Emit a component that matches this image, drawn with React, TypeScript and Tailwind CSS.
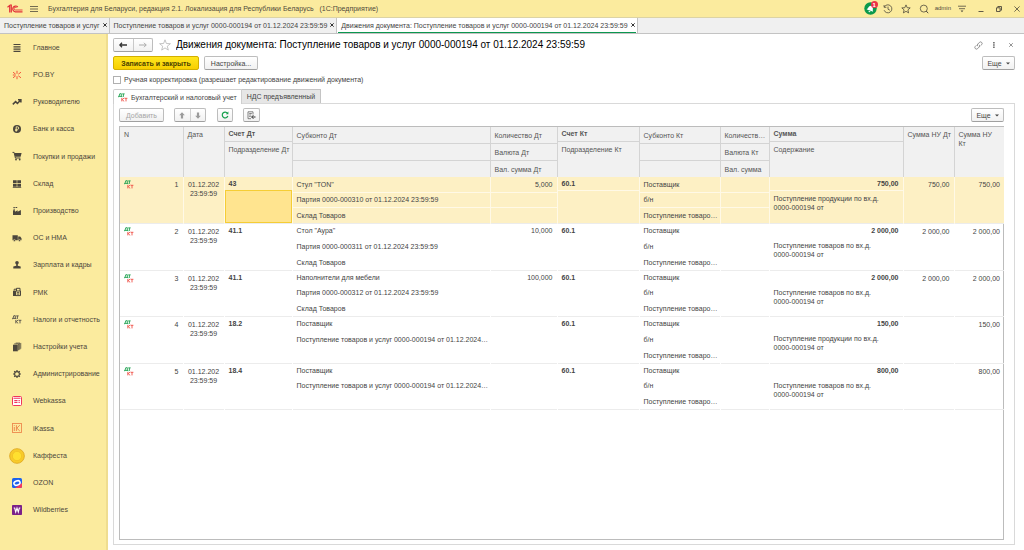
import type { ReactNode } from 'react';

interface Entry {
  n: number;
  debit: string;
  debitSub: string[];
  quantity: string;
  total: string;
  content: string;
  taxDebit: string;
  taxCredit: string;
}

const GOODS = 'Поступление товаров по вх.д. 0000-000194 от';
const PRODUCTS = 'Поступление продукции по вх.д. 0000-000194 от';
const RECEIPT = 'Поступление товаров и услуг 0000-000194 от 01.12.2024 23:59:59';

const entries: Entry[] = [
  { n: 1, debit: '43', debitSub: ['Стул "TON"', 'Партия 0000-000310 от 01.12.2024 23:59:59', 'Склад Товаров'], quantity: '5,000', total: '750,00', content: PRODUCTS, taxDebit: '750,00', taxCredit: '750,00' },
  { n: 2, debit: '41.1', debitSub: ['Стол "Аура"', 'Партия 0000-000311 от 01.12.2024 23:59:59', 'Склад Товаров'], quantity: '10,000', total: '2 000,00', content: GOODS, taxDebit: '2 000,00', taxCredit: '2 000,00' },
  { n: 3, debit: '41.1', debitSub: ['Наполнители для мебели', 'Партия 0000-000312 от 01.12.2024 23:59:59', 'Склад Товаров'], quantity: '100,000', total: '2 000,00', content: GOODS, taxDebit: '2 000,00', taxCredit: '2 000,00' },
  { n: 4, debit: '18.2', debitSub: ['Поставщик', 'Поступление товаров и услуг 0000-000194 от 01.12.2024…', ''], quantity: '', total: '150,00', content: PRODUCTS, taxDebit: '', taxCredit: '150,00' },
  { n: 5, debit: '18.4', debitSub: ['Поставщик', 'Поступление товаров и услуг 0000-000194 от 01.12.2024…', ''], quantity: '', total: '800,00', content: GOODS, taxDebit: '', taxCredit: '800,00' },
];

const windowTabs = [
  { title: 'Поступление товаров и услуг', active: false },
  { title: RECEIPT, active: false },
  { title: `Движения документа: ${RECEIPT}`, active: true },
];

function DtKtIcon({ className = '', mono = false }: { className?: string; mono?: boolean }) {
  return (
    <svg className={`shrink-0 ${className}`} width="10" height="9" viewBox="0 0 10 9" fill="none" strokeWidth="0.9" aria-hidden="true">
      <path stroke={mono ? '#55504a' : '#1fa350'} d="M.5 4.2V3.4H4v.8M1 3.4 1.8.7h1.5v2.7M4.2.9h2.5M5.4.9v3" />
      <path stroke={mono ? '#55504a' : '#ee4e45'} d="M3.8 5v3.4M6.2 5 4.2 6.6l2 1.8M6.6 5.3h2.8M8 5.3v3.1" />
    </svg>
  );
}

function Icon({ children, size = 10 }: { children: ReactNode; size?: number }) {
  return (
    <svg width={size} height={size} viewBox="0 0 10 10" fill="none" stroke="currentColor" strokeWidth="1" aria-hidden="true">
      {children}
    </svg>
  );
}

const sections: { label: string; icon: ReactNode }[] = [
  { label: 'Главное', icon: <Icon><path d="M1.5 1.5h7M1.5 3.8h7M1.5 6.1h7M1.5 8.4h7" strokeWidth="1.2" /></Icon> },
  { label: 'PO.BY', icon: <Icon><path stroke="#f4573c" d="M5 .8v3M5 6.2v3M1 2.2l2.7 2M1 7.8l2.7-2M9 2.2l-2.7 2M9 7.8l-2.7-2M.8 5h2.4" /></Icon> },
  { label: 'Руководителю', icon: <Icon><path strokeWidth="1.5" d="M.8 7.4 3.6 4.6l1.8 1.8 2.8-3M6 2.7h2.9v2.9" /></Icon> },
  { label: 'Банк и касса', icon: <Icon><circle cx="5" cy="5" r="4" fill="currentColor" stroke="none" /><path stroke="#fbeb9e" strokeWidth=".9" d="M4.2 7.7V2.8h1.2a1.3 1.3 0 0 1 0 2.6H3.2M3.2 6.5h2.2" /></Icon> },
  { label: 'Покупки и продажи', icon: <Icon><path d="M.5 1.4h1.6L3.4 7h5" /><path fill="currentColor" stroke="none" d="M2.4 2h7.2l-1 3.8H3.3z" /><circle cx="4" cy="8.5" r=".9" fill="currentColor" stroke="none" /><circle cx="7.7" cy="8.5" r=".9" fill="currentColor" stroke="none" /></Icon> },
  { label: 'Склад', icon: <Icon><path fill="currentColor" stroke="none" d="M1 1.3h3.7v3H1zM5.3 1.3H9v3H5.3zM1 4.9h3.7v2.8H1zM5.3 4.9H9v2.8H5.3zM.8 8.2h8.4v.8H.8z" /></Icon> },
  { label: 'Производство', icon: <Icon><path fill="currentColor" stroke="none" d="M1 9V4.2h2v1.6l2.6-1.6v1.6L8.900 4v5zM1.5 2.8h1.3v1H1.5zM1.4 1h1.4v.9H1.400zM3.500 1h1.700v.9H3.500z" /></Icon> },
  { label: 'ОС и НМА', icon: <Icon><path fill="currentColor" stroke="none" d="M.5 2.3h5.3v4.9H.5zM6.2 3.4h2l1.3 1.9v1.9H6.2z" /><circle cx="2.4" cy="7.4" r="1" fill="currentColor" stroke="#fbeb9e" strokeWidth=".5" /><circle cx="7.5" cy="7.4" r="1" fill="currentColor" stroke="#fbeb9e" strokeWidth=".5" /></Icon> },
  { label: 'Зарплата и кадры', icon: <Icon><circle cx="5" cy="2.7" r="1.8" fill="currentColor" stroke="none" /><path fill="currentColor" stroke="none" d="M4.2 4h1.6v1.7l2.9.9v2H1.3v-2l2.9-.9z" /></Icon> },
  { label: 'РМК', icon: <Icon><path fill="currentColor" stroke="none" d="M1 3.8h3V9H1z" /><path d="M3.7 4h4.8v4.6H3.7zM4.5 4V1.3h3.5V4M5 5.7h2.4M5 7.1h2.4M2.2 3.6V2.2h2" /></Icon> },
  { label: 'Налоги и отчетность', icon: <DtKtIcon mono /> },
  { label: 'Настройки учета', icon: <Icon><path fill="currentColor" stroke="none" d="M1 2.7h4.8v6.6H1z" /><path strokeWidth=".8" d="M2.2 1.9h4.4v6.4M3.7 1.1H8v6.3" /><path strokeWidth=".6" d="M7.3 1.3v6.5M8.8.9v5.8" /></Icon> },
  { label: 'Администрирование', icon: <Icon><circle cx="5" cy="5" r="2.4" strokeWidth="1.1" /><path strokeWidth="1.2" d="M5 1v1.500M5 7.500V9M1 5h1.500M7.500 5H9M2.200 2.200l1 1M6.800 6.800l1 1M7.800 2.200l-1 1M3.200 6.800l-1 1" /></Icon> },
  { label: 'Webkassa', icon: <Icon><rect x=".5" y=".5" width="9" height="9" rx="1" fill="#fff" stroke="#f0355a" strokeWidth="1" /><path stroke="#f0355a" strokeWidth="1.1" d="M1.5 2.2h7M2.3 4.6h3.2M2.3 6.5h3.2M6.5 4.6h1.3M6.5 6.5h1.3" /></Icon> },
  { label: 'iKassa', icon: <Icon><rect x=".5" y=".5" width="9" height="9" stroke="#ee8a4e" strokeWidth=".9" /><path stroke="#ee8a4e" strokeWidth="1" d="M2.3 4v4M2.3 2.2v.9M4.4 2.2V8M7.8 2.2 4.8 5.1l3 2.9" /></Icon> },
  { label: 'Каффеста', icon: <Icon size={16}><circle cx="5" cy="5" r="4.6" fill="#f8cb2a" stroke="#dca51f" strokeWidth=".5" /><circle cx="5" cy="5" r="2.9" fill="#ffe02f" stroke="#f0b924" strokeWidth=".4" /></Icon> },
  { label: 'OZON', icon: <Icon><rect width="10" height="10" rx="1.6" fill="#1b62ee" stroke="none" /><path fill="#f53a5d" stroke="none" d="M10 5v3.4A1.6 1.6 0 0 1 8.4 10H3z" /><ellipse cx="5" cy="5" rx="3.2" ry="2.1" stroke="#fff" strokeWidth="1.5" transform="rotate(-20 5 5)" /></Icon> },
  { label: 'Wildberries', icon: <Icon><rect width="10" height="10" rx=".8" fill="#7b2189" stroke="none" /><path stroke="#fff" strokeWidth="1.1" d="M1.7 3h1l1 4 1.3-4 1.3 4 1-4h1" /></Icon> },
];

const button = 'flex h-[14px] items-center justify-center rounded-xs border border-[#bdbdbd] border-b-[#a0a0a0] bg-linear-to-b from-white to-[#f1f1f1]';

function TitleBar() {
  return (
    <header className="flex h-[17px] items-center bg-[#fbeb9e] px-[7px] text-[#4f4a3c]">
      <svg width="16" height="10" viewBox="0 0 16 10" fill="none" stroke="#e2323a" strokeWidth="1.2" aria-label="1С" role="img">
        <path d="M.5 3.2 2.7 1.4V8.5M4.3 8.5V1H2.9" />
        <path d="M10.8 3A2.9 2.9 0 1 0 8.3 7.8H15.5" />
        <path d="M9.7 4A1.4 1.4 0 1 0 8.4 6H15.5" strokeWidth=".9" />
      </svg>
      <button aria-label="Меню" className="ml-[7px]">
        <svg width="8" height="8" viewBox="0 0 8 8" stroke="currentColor" strokeWidth=".8"><path d="M0 1.5h8M0 4h8M0 6.5h8" /></svg>
      </button>
      <span className="ml-[10px] flex-1 truncate whitespace-pre">Бухгалтерия для Беларуси, редакция 2.1. Локализация для Республики Беларусь   (1С:Предприятие)</span>
      <div className="flex items-center">
        <button aria-label="Уведомления" className="relative mr-[6px]">
          <svg width="13" height="13" viewBox="0 0 13 13"><circle cx="6.5" cy="6.5" r="6.2" fill="#0c9a4c" /><path fill="#fff" d="M2.8 8.7C4.5 7.5 3.7 3.6 6.5 3.6S8.500 7.500 10.200 8.700zM5.400 9.200h2.200a1.100 1.100 0 0 1-2.200 0z" transform="rotate(20 6.5 6.5)" /></svg>
          <span className="absolute -top-px -right-px flex size-[7px] items-center justify-center rounded-full bg-[#ee3344] text-[6px] leading-none font-bold text-white">1</span>
        </button>
        <button aria-label="История" className="mr-2">
          <Icon><path strokeWidth=".8" d="M1.3 3A4 4 0 1 1 1.1 6.2M1.1 1v2.3h2.3M5 2.6V5.2l1.9 1" /></Icon>
        </button>
        <button aria-label="Избранное" className="mr-2">
          <Icon><path strokeWidth=".8" d="m5 .9 1.2 2.8 3 .2L6.9 5.9l.7 3L5 7.3 2.4 8.9l.7-3L.8 3.9l3-.2z" /></Icon>
        </button>
        <button aria-label="Поиск" className="mr-[6px]">
          <Icon><circle cx="4.8" cy="4.6" r="3.5" strokeWidth=".8" /><path d="m7.2 7 2 2.2" /></Icon>
        </button>
        <span className="mr-[7px] text-[6px]">admin</span>
        <button aria-label="Сервис" className="mr-[12px]">
          <svg width="8" height="8" viewBox="0 0 8 8" stroke="currentColor" strokeWidth=".8" fill="none"><path d="M0 1.2h8M1 3.7h6" /><path d="M2.6 5.6h2.8L4 7.2z" fill="currentColor" stroke="none" /></svg>
        </button>
        <button aria-label="Свернуть" className="mr-[12px]">
          <svg width="6" height="8" viewBox="0 0 6 8" stroke="currentColor" strokeWidth=".9"><path d="M.5 6.5h5" /></svg>
        </button>
        <button aria-label="Восстановить" className="mr-[12px]">
          <svg width="6" height="6" viewBox="0 0 6 6" stroke="currentColor" strokeWidth=".9" fill="none"><path d="M.5 1.8h3.6v3.7H.5zM1.8 1.6V.5h3.7v3.7H4.2" /></svg>
        </button>
        <button aria-label="Закрыть программу" className="-mr-[3px]">
          <svg width="6" height="6" viewBox="0 0 6 6" stroke="currentColor" strokeWidth=".8"><path d="m.4.4 5.2 5.2M5.6.4.4 5.6" /></svg>
        </button>
      </div>
    </header>
  );
}

function WindowTabs() {
  return (
    <nav className="flex h-[17px] border-t border-b border-[#c3c3c3] border-t-[#dcd3a5] bg-[#f0f0f0]">
      {windowTabs.map((tab) => (
        <div
          key={tab.title}
          className={`flex border-r border-[#c3c3c3] px-px ${tab.active ? 'bg-white' : ''}`}
        >
          <div className={`flex items-center gap-[3px] border-b pr-px pl-[3px] ${tab.active ? 'border-[#0b9750]' : 'border-transparent'}`}>
            <a href="#" className="whitespace-nowrap">{tab.title}</a>
            <button aria-label="Закрыть">
              <svg width="4" height="4" viewBox="0 0 4 4" stroke="#333" strokeWidth="1"><path d="m.3.3 3.4 3.4M3.7.3.3 3.7" /></svg>
            </button>
          </div>
        </div>
      ))}
    </nav>
  );
}

function Sidebar() {
  return (
    <aside className="w-[108px] shrink-0 border-r-2 border-[#efdd90] bg-[#fbeb9e] text-[#4b463c]">
      <ul>
        {sections.map((section) => (
          <li key={section.label} className="h-[27px] nth-[5n]:h-7">
            <a href="#" className="flex h-full items-center">
              <span className="flex w-[33px] justify-center">{section.icon}</span>
              <span className="whitespace-nowrap">{section.label}</span>
            </a>
          </li>
        ))}
      </ul>
    </aside>
  );
}

function MoreButton() {
  return (
    <button className={`${button} w-[33px] gap-[4px]`}>
      Еще
      <svg width="4" height="3" viewBox="0 0 4 3" fill="#444"><path d="M0 .5h4L2 2.5z" /></svg>
    </button>
  );
}

// Two stacked fields in one column: the account line and what belongs to it
function Pair({ top, bottom, header = false, selected = false }: { top: string; bottom: string; header?: boolean; selected?: boolean }) {
  const line = header ? 'border-[#d4d4d4]' : selected ? 'border-[#fff9e6]' : 'border-transparent';
  return (
    <div className="flex h-full flex-col">
      <div className={`border-b px-[4px] font-bold ${header ? 'h-[15px] leading-[13px]' : 'h-[14px] leading-[13px]'} ${line}`}>{top}</div>
      <div className={`flex-1 pl-[4px] whitespace-nowrap ${header ? 'pt-[3px]' : ''}`}>{bottom}</div>
    </div>
  );
}

function Triple({ lines, header = false, selected = false, right = false }: { lines: string[]; header?: boolean; selected?: boolean; right?: boolean }) {
  const line = header ? 'border-[#d4d4d4]' : selected ? 'border-[#fff9e6]' : 'border-transparent';
  return (
    <div className="flex h-full flex-col">
      {lines.map((text, i) => (
        <div
          key={i}
          className={`flex flex-1 items-center overflow-hidden px-[4px] whitespace-nowrap ${i < 2 ? `border-b ${line}` : ''} ${right ? 'justify-end' : ''}`}
        >
          {text}
        </div>
      ))}
    </div>
  );
}

function EntryRow({ entry }: { entry: Entry }) {
  const selected = entry.n === 1;
  const cell = `p-0 h-[inherit] align-top border-r last:border-r-0 ${selected ? 'border-[#fff9e6]' : 'border-r-transparent'}`;
  return (
    <tr className={`h-[46px] border-b border-[#ececec] even:h-[47px] ${selected ? 'bg-[#fdf0c4]' : ''}`}>
      <td className={cell}>
        <div className="flex items-start justify-between px-[4px] pt-[3px]">
          <DtKtIcon />
          <span>{entry.n}</span>
        </div>
      </td>
      <td className={cell}>
        <div className="overflow-hidden px-[3px] pt-[3px] text-center">01.12.202 23:59:59</div>
      </td>
      <td className={cell}>
        <div className="flex h-full flex-col">
          <div className="h-[13px] px-[4px] leading-[13px] font-bold">{entry.debit}</div>
          <div className={`flex-1 ${selected ? 'border border-[#f5cd35] bg-[#ffe48f]' : ''}`} />
        </div>
      </td>
      <td className={cell}><Triple lines={entry.debitSub} selected={selected} /></td>
      <td className={cell}><Triple lines={[entry.quantity, '', '']} selected={selected} right /></td>
      <td className={cell}><Pair top="60.1" bottom="" selected={selected} /></td>
      <td className={cell}><Triple lines={['Поставщик', 'б/н', 'Поступление товаро…']} selected={selected} /></td>
      <td className={cell}><Triple lines={['', '', '']} selected={selected} /></td>
      <td className={cell}>
        <div className="flex h-full flex-col">
          <div className={`h-[14px] border-b px-[4px] text-right leading-[13px] font-bold ${selected ? 'border-[#fff9e6]' : 'border-transparent'}`}>{entry.total}</div>
          <div className="w-[114px] px-[4px] pt-[3px]">{entry.content}</div>
        </div>
      </td>
      <td className={`${cell} text-right`}><div className="px-[4px] pt-[3px]">{entry.taxDebit}</div></td>
      <td className={`${cell} text-right`}><div className="px-[4px] pt-[3px]">{entry.taxCredit}</div></td>
    </tr>
  );
}

function EntriesTable() {
  const head = 'p-0 h-[inherit] border-r border-[#d4d4d4] align-top font-normal last:border-r-0';
  return (
    <table className="w-full table-fixed border-collapse text-left leading-[9px]">
      <colgroup>
        <col className="w-[63px]" />
        <col className="w-[41px]" />
        <col className="w-[68px]" />
        <col className="w-[198px]" />
        <col className="w-[67px]" />
        <col className="w-[82px]" />
        <col className="w-[81px]" />
        <col className="w-[49px]" />
        <col className="w-[134px]" />
        <col className="w-[51px]" />
        <col className="w-[50px]" />
      </colgroup>
      <thead>
        <tr className="h-[50px] bg-[#f1f1f1] text-[#555]">
          <th className={head}><div className="px-[4px] pt-[3px]">N</div></th>
          <th className={head}><div className="px-[4px] pt-[3px]">Дата</div></th>
          <th className={head}><Pair header top="Счет Дт" bottom="Подразделение Дт" /></th>
          <th className={head}><Triple header lines={['Субконто Дт', '', '']} /></th>
          <th className={head}><Triple header lines={['Количество Дт', 'Валюта Дт', 'Вал. сумма Дт']} /></th>
          <th className={head}><Pair header top="Счет Кт" bottom="Подразделение Кт" /></th>
          <th className={head}><Triple header lines={['Субконто Кт', '', '']} /></th>
          <th className={head}><Triple header lines={['Количеств…', 'Валюта Кт', 'Вал. сумма']} /></th>
          <th className={head}><Pair header top="Сумма" bottom="Содержание" /></th>
          <th className={head}><div className="px-[4px] pt-[3px] whitespace-nowrap">Сумма НУ Дт</div></th>
          <th className={head}><div className="px-[4px] pt-[3px]">Сумма НУ Кт</div></th>
        </tr>
      </thead>
      <tbody>
        {entries.map((entry) => (
          <EntryRow key={entry.n} entry={entry} />
        ))}
      </tbody>
    </table>
  );
}

export default function App() {
  return (
    <div className="flex min-h-screen flex-col bg-white font-['Liberation_Sans',Arial,sans-serif] text-[7px] leading-[9px] text-[#444]">
      <TitleBar />
      <WindowTabs />
      <div className="flex flex-1">
        <Sidebar />
        <main className="flex min-w-0 flex-1 flex-col pt-[4px] pr-[9px] pb-[5px] pl-[5px]">
          <div className="flex items-center">
            <div className={`${button} w-[40px]`}>
              <button aria-label="Назад" className="flex h-full flex-1 items-center justify-center border-r border-[#c9c9c9]">
                <svg width="8" height="6" viewBox="0 0 8 6" stroke="#333" strokeWidth="1.3" fill="none"><path d="M.8 3H8M3 .8.8 3 3 5.2" /></svg>
              </button>
              <button aria-label="Вперед" className="flex h-full flex-1 items-center justify-center">
                <svg width="8" height="6" viewBox="0 0 8 6" stroke="#aaa" strokeWidth="1" fill="none"><path d="M0 3h7.2M5 .8 7.2 3 5 5.2" /></svg>
              </button>
            </div>
            <button aria-label="В избранное" className="ml-[6px]">
              <svg width="12" height="12" viewBox="0 0 12 12" fill="none" stroke="#b5b5b5" strokeWidth=".8"><path d="m6 .8 1.4 3.7 4 .2L8.3 7.2l1 3.9L6 8.9l-3.3 2.2 1-3.9L.6 4.7l4-.2z" /></svg>
            </button>
            <h1 className="ml-[5px] flex-1 truncate text-[10px] leading-[14px] text-black">Движения документа: {RECEIPT}</h1>
            <button aria-label="Получить ссылку" className="mr-[10px] text-[#777]">
              <svg width="9" height="9" viewBox="0 0 9 9" fill="none" stroke="currentColor" strokeWidth=".8"><path d="M3.8 5.2a1.6 1.6 0 0 1 0-2.2L5.5 1.3a1.6 1.6 0 0 1 2.3 2.2L6.6 4.7M5.2 3.8a1.6 1.6 0 0 1 0 2.2L3.5 7.7a1.6 1.6 0 0 1-2.3-2.2L2.4 4.3" /></svg>
            </button>
            <button aria-label="Действия" className="mr-[14px]">
              <svg width="2" height="6" viewBox="0 0 2 6" fill="#555"><path d="M.2 0h1.4v1.4H.2zM.2 2.3h1.4v1.4H.2zM.2 4.6h1.4V6H.2z" /></svg>
            </button>
            <button aria-label="Закрыть форму" className="mr-[2px]">
              <svg width="4" height="4" viewBox="0 0 4 4" stroke="#666" strokeWidth=".7"><path d="m.2.2 3.6 3.6M3.8.2.2 3.8" /></svg>
            </button>
          </div>

          <div className="mt-[4px] flex items-center gap-[5px]">
            <button className="h-[14px] w-[86px] rounded-xs border border-[#d3af00] bg-linear-to-b from-[#ffe61c] to-[#f8cf00] font-bold text-[#4a4100]">
              Записать и закрыть
            </button>
            <button className={`${button} w-[54px]`}>Настройка...</button>
            <span className="flex-1" />
            <MoreButton />
          </div>

          <label className="mt-[5px] flex items-center gap-[3px]">
            <input type="checkbox" className="size-[8px] appearance-none border border-[#b0b0b0] bg-white" />
            Ручная корректировка (разрешает редактирование движений документа)
          </label>

          <div role="tablist" className="mt-[5px] flex h-[14px]">
            <button role="tab" aria-selected="true" className="relative z-10 -mb-px flex items-center gap-[3px] rounded-tl-xs border border-b-0 border-[#cfcfcf] bg-white px-[4px]">
              <DtKtIcon />
              Бухгалтерский и налоговый учет
            </button>
            <button role="tab" aria-selected="false" className="border border-b-0 border-l-0 border-[#c4c4c4] bg-[#e6e6e6] px-[5px]">НДС предъявленный</button>
          </div>

          <section className="flex flex-1 flex-col border border-[#d9d9d9] px-[5px] pt-[4px] pb-[4px]">
            <div className="mb-[4px] flex items-center">
              <button disabled className={`${button} w-[45px] text-[#a5a5a5]`}>Добавить</button>
              <div className={`${button} ml-[10px] w-[32px] text-[#9b9b9b]`}>
                <button disabled aria-label="Вверх" className="flex h-full flex-1 items-center justify-center border-r border-[#d0d0d0]">
                  <svg width="6" height="7" viewBox="0 0 6 7" fill="currentColor"><path d="M3 .3 5.8 3.3H4.1V6.6H1.9V3.3H.2z" /></svg>
                </button>
                <button disabled aria-label="Вниз" className="flex h-full flex-1 items-center justify-center">
                  <svg width="6" height="7" viewBox="0 0 6 7" fill="currentColor"><path d="M3 6.7 5.8 3.7H4.1V.4H1.9V3.7H.2z" /></svg>
                </button>
              </div>
              <button aria-label="Обновить" className={`${button} ml-[11px] w-[16px]`}>
                <svg width="8" height="8" viewBox="0 0 8 8" fill="none" stroke="#17a04e" strokeWidth="1.2"><path d="M6.5 2.2A2.9 2.9 0 1 0 6.9 5" /><path d="M7.4.5v2.7H4.8z" fill="#17a04e" stroke="none" /></svg>
              </button>
              <button aria-label="Вывести список" className={`${button} ml-[10px] w-[17px]`}>
                <svg width="9" height="9" viewBox="0 0 9 9" fill="none" stroke="#666" strokeWidth=".8"><path d="M6 3.5V.8H1v6.9h3M2.2 2.5h2.6M2.2 4h2M2.2 5.5h1.5" /><path stroke="#333" strokeWidth="1" d="M8.5 6H4.8M6.4 4.2 4.6 6l1.8 1.8" /></svg>
              </button>
              <span className="flex-1" />
              <MoreButton />
              <span className="w-[5px]" />
            </div>
            <div className="mr-[5px] flex-1 border border-[#bcbcbc]">
              <EntriesTable />
            </div>
          </section>
        </main>
      </div>
    </div>
  );
}
